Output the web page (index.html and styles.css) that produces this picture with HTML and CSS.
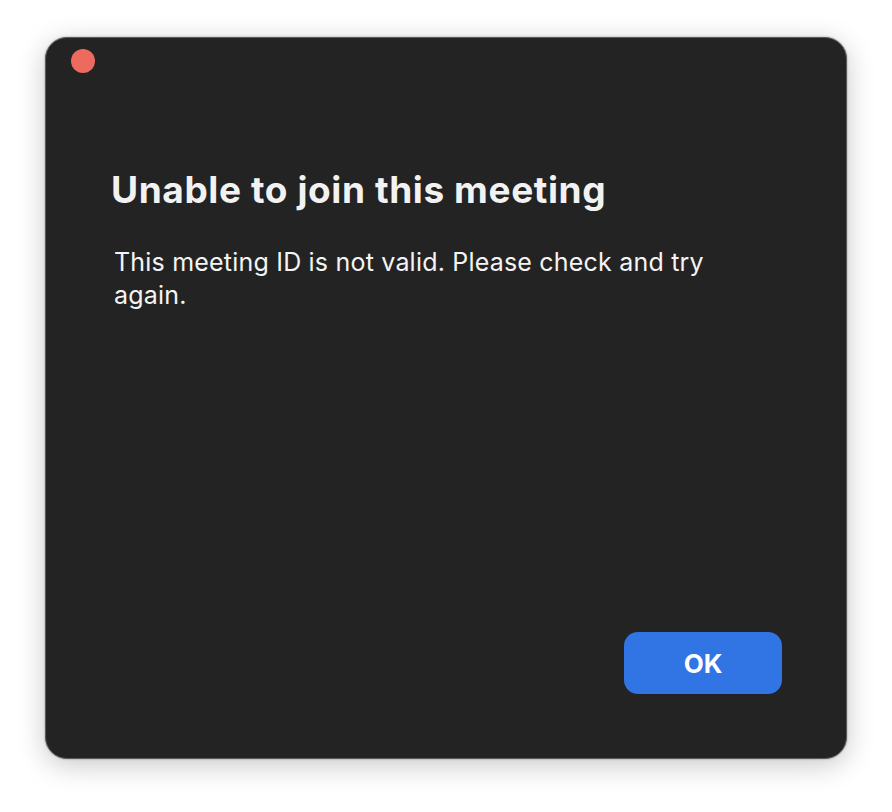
FILE: index.html
```html
<!DOCTYPE html>
<html>
<head>
<meta charset="utf-8">
<link rel="stylesheet" href="styles.css">
</head>
<body>
<div class="window">
  <div class="titlebar"><span class="close"></span></div>
  <div class="content">
    <h1 class="title">Unable to join this meeting</h1>
    <p class="message">This meeting ID is not valid. Please check and try again.</p>
  </div>
  <div class="actions"><button class="ok">OK</button></div>
</div>
</body>
</html>
```
FILE: styles.css
```css
html, body { margin: 0; padding: 0; background: #ffffff; }
body {
  width: 892px; height: 812px;
  padding: 37px 0 0 45px;
  box-sizing: border-box;
  font-family: Inter, "Noto Sans", sans-serif;
}
.window {
  width: 802px; height: 722px;
  box-sizing: border-box;
  background: #232323;
  border: 1.5px solid #5c5c5c;
  border-radius: 22px;
  box-shadow: 0 6px 28px rgba(0,0,0,0.22), 0 0 2px rgba(0,0,0,0.4);
  display: flex; flex-direction: column;
}
.titlebar { height: 60px; padding: 11px 0 0 25px; box-sizing: border-box; }
.close {
  display: block; width: 24px; height: 24px; border-radius: 50%;
  background: #ec6a5e;
}
.content { flex: 1; padding: 0 0 0 65px; }
.title {
  margin: 69px 0 0 0;
  font-size: 37px; font-weight: 700; color: #f2f2f2;
  letter-spacing: 0.6px; line-height: 46px;
}
.message {
  margin: 33px 0 0 3px; width: 640px;
  font-size: 25px; font-weight: 400; color: #f4f4f4;
  letter-spacing: 0.2px;
  line-height: 33px;
}
.actions { display: flex; justify-content: flex-end; padding: 0 64px 64px 0; }
.ok {
  width: 158px; height: 62px; border: none; border-radius: 14px;
  background: #3174e4; color: #fff;
  font-family: Inter, "Noto Sans", sans-serif;
  font-size: 26px; font-weight: 700;
}
```
